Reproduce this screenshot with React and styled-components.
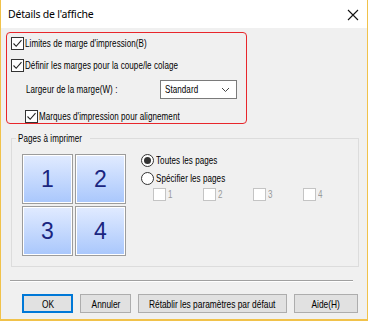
import React from 'react';
import styled, { createGlobalStyle } from 'styled-components';

const GlobalStyle = createGlobalStyle`
  html, body {
    margin: 0;
    padding: 0;
    background: #ffffff;
  }
`;

const Check = ({ checked, disabled }) => (
  <Box $disabled={disabled}>
    {checked && (
      <svg width="11" height="11" viewBox="0 0 11 11">
        <path d="M1.5 5.5 L4.2 8.3 L9.5 2.2" fill="none" stroke="#222" strokeWidth="1.1" />
      </svg>
    )}
  </Box>
);

const App = () => {
  return (
    <>
      <GlobalStyle />
      <Window>
        <TitleBar>
          <Title>Détails de l'affiche</Title>
          <svg width="12" height="12" viewBox="0 0 12 12">
            <path d="M1 1 L11 11 M11 1 L1 11" stroke="#111" strokeWidth="1.1" />
          </svg>
        </TitleBar>
        <Body>
          <Highlight>
            <Row>
              <Check checked />
              <Label>Limites de marge d'impression(B)</Label>
            </Row>
            <Row>
              <Check checked />
              <Label>Définir les marges pour la coupe/le colage</Label>
            </Row>
            <MarginRow>
              <Label>Largeur de la marge(W) :</Label>
              <Select>
                <Label>Standard</Label>
                <svg width="9" height="6" viewBox="0 0 9 6">
                  <path d="M1 1 L4.5 4.5 L8 1" fill="none" stroke="#444" strokeWidth="1" />
                </svg>
              </Select>
            </MarginRow>
            <Row $indent>
              <Check checked />
              <Label>Marques d'impression pour alignement</Label>
            </Row>
          </Highlight>

          <Group>
            <Legend>
              <Label>Pages à imprimer</Label>
            </Legend>
            <GroupInner>
              <Tiles>
                {[1, 2, 3, 4].map((n) => (
                  <Tile key={n}>{n}</Tile>
                ))}
              </Tiles>
              <Options>
                <RadioRow>
                  <Radio $checked />
                  <Label>Toutes les pages</Label>
                </RadioRow>
                <RadioRow>
                  <Radio />
                  <Label>Spécifier les pages</Label>
                </RadioRow>
                <PageChecks>
                  {[1, 2, 3, 4].map((n) => (
                    <PageCheck key={n}>
                      <Check disabled />
                      <DimLabel>{n}</DimLabel>
                    </PageCheck>
                  ))}
                </PageChecks>
              </Options>
            </GroupInner>
          </Group>

          <Separator />

          <Buttons>
            <Button $default $w={51}><ButtonText>OK</ButtonText></Button>
            <Button $w={51}><ButtonText>Annuler</ButtonText></Button>
            <Button $w={149}><ButtonText>Rétablir les paramètres par défaut</ButtonText></Button>
            <Button $w={64}><ButtonText>Aide(H)</ButtonText></Button>
          </Buttons>
        </Body>
      </Window>
    </>
  );
};

const uiFont = `'Liberation Sans', Arial, sans-serif`;

const Window = styled.div`
  width: 368px;
  height: 321px;
  box-sizing: border-box;
  border: 1px solid #f1c24a;
  border-top: none;
  border-bottom-width: 2px;
  display: flex;
  flex-direction: column;
  font-family: ${uiFont};
  font-size: 11px;
  line-height: 13px;
  color: #000;
  background: #f0f0f0;
`;

const TitleBar = styled.div`
  height: 28px;
  background: #ffffff;
  display: flex;
  align-items: center;
  justify-content: space-between;
  padding: 0 8px 0 7px;
  svg {
    margin-top: 2px;
  }
`;

const Title = styled.span`
  font-family: 'Noto Sans', 'Open Sans', sans-serif;
  font-size: 10.5px;
  letter-spacing: -0.2px;
`;

const Body = styled.div`
  flex: 1;
  display: flex;
  flex-direction: column;
  padding: 4px 7px 0 5px;
`;

const Highlight = styled.div`
  width: 241px;
  height: 92px;
  box-sizing: border-box;
  border: 1.5px solid #e8262b;
  border-radius: 4px;
  padding: 4px 0 0 4px;
  display: flex;
  flex-direction: column;
`;

const Row = styled.div`
  display: flex;
  align-items: center;
  height: 13px;
  margin-left: ${(p) => (p.$indent ? '14px' : '0')};
  & + & {
    margin-top: 9px;
  }
`;

const MarginRow = styled.div`
  display: flex;
  align-items: center;
  justify-content: space-between;
  width: 212px;
  margin: 8px 0 11px 14px;
`;

const Box = styled.span`
  width: 13px;
  height: 13px;
  box-sizing: border-box;
  border: 1px solid ${(p) => (p.$disabled ? '#c4c4c4' : '#333333')};
  background: #ffffff;
  display: inline-flex;
  align-items: center;
  justify-content: center;
  flex: none;
`;

/* the dialog font is a narrow bitmap face, so squeeze Liberation Sans */
const Label = styled.span`
  display: inline-block;
  margin-left: 1px;
  white-space: nowrap;
  letter-spacing: 0.1px;
  transform: scaleX(0.73);
  transform-origin: 0 50%;
`;

const DimLabel = styled(Label)`
  color: #9a9a9a;
  margin-left: 2px;
`;

const Select = styled.div`
  width: 77px;
  height: 19px;
  box-sizing: border-box;
  background: #ffffff;
  border: 1px solid #7a7a7a;
  display: flex;
  align-items: center;
  justify-content: space-between;
  padding: 0 6px 0 3px;
  overflow: hidden;
`;

const Group = styled.fieldset`
  margin: 8px 0 0 5px;
  padding: 0;
  width: 348px;
  height: 135px;
  box-sizing: border-box;
  border: 1px solid #dcdcdc;
`;

const Legend = styled.legend`
  margin-left: 4px;
  padding: 0 2px 0 1px;
  width: 74px;
  box-sizing: border-box;
`;

const GroupInner = styled.div`
  display: flex;
  padding: 9px 0 0 10px;
`;

const Tiles = styled.div`
  display: grid;
  grid-template-columns: 51px 51px;
  grid-auto-rows: 50px;
  gap: 2px 2px;
`;

const Tile = styled.div`
  box-sizing: border-box;
  border: 1px solid #9c9c9c;
  box-shadow: inset 0 0 0 1px #ffffff;
  background: linear-gradient(#e1ebff, #a9c7fc);
  display: flex;
  align-items: center;
  justify-content: center;
  font-family: 'Liberation Sans', Arial, sans-serif;
  font-size: 23px;
  color: #1a2580;
`;

const Options = styled.div`
  margin: 0 0 0 15px;
  display: flex;
  flex-direction: column;
`;

const RadioRow = styled.div`
  display: flex;
  align-items: center;
  height: 13px;
  margin-bottom: 5px;
`;

const Radio = styled.span`
  width: 13px;
  height: 13px;
  box-sizing: border-box;
  border: 1px solid #333333;
  border-radius: 50%;
  background: #ffffff;
  display: inline-flex;
  align-items: center;
  justify-content: center;
  flex: none;
  margin-right: 1px;
  &::after {
    content: '';
    width: 7px;
    height: 7px;
    border-radius: 50%;
    background: ${(p) => (p.$checked ? '#333333' : 'transparent')};
  }
`;

const PageChecks = styled.div`
  display: flex;
  margin: -2px 0 0 12px;
`;

const PageCheck = styled.div`
  display: flex;
  align-items: center;
  width: 50px;
`;

const Separator = styled.div`
  margin: 13px 7px 0 4px;
  height: 1px;
  background: #a0a0a0;
  border-bottom: 1px solid #ffffff;
`;

const Buttons = styled.div`
  display: flex;
  gap: 7px;
  margin: 12px 0 0 16px;
`;

const Button = styled.button`
  width: ${(p) => p.$w}px;
  height: 19px;
  box-sizing: border-box;
  padding: 0;
  background: #e1e1e1;
  border: 1px solid ${(p) => (p.$default ? '#0078d7' : '#adadad')};
  box-shadow: ${(p) => (p.$default ? 'inset 0 0 0 1px #0078d7' : 'none')};
  display: flex;
  align-items: center;
  justify-content: center;
  font-family: ${uiFont};
  font-size: 11px;
  color: #000;
  white-space: nowrap;
`;

const ButtonText = styled.span`
  display: inline-block;
  transform: scaleX(0.76);
  transform-origin: 50% 50%;
`;

export default App;
